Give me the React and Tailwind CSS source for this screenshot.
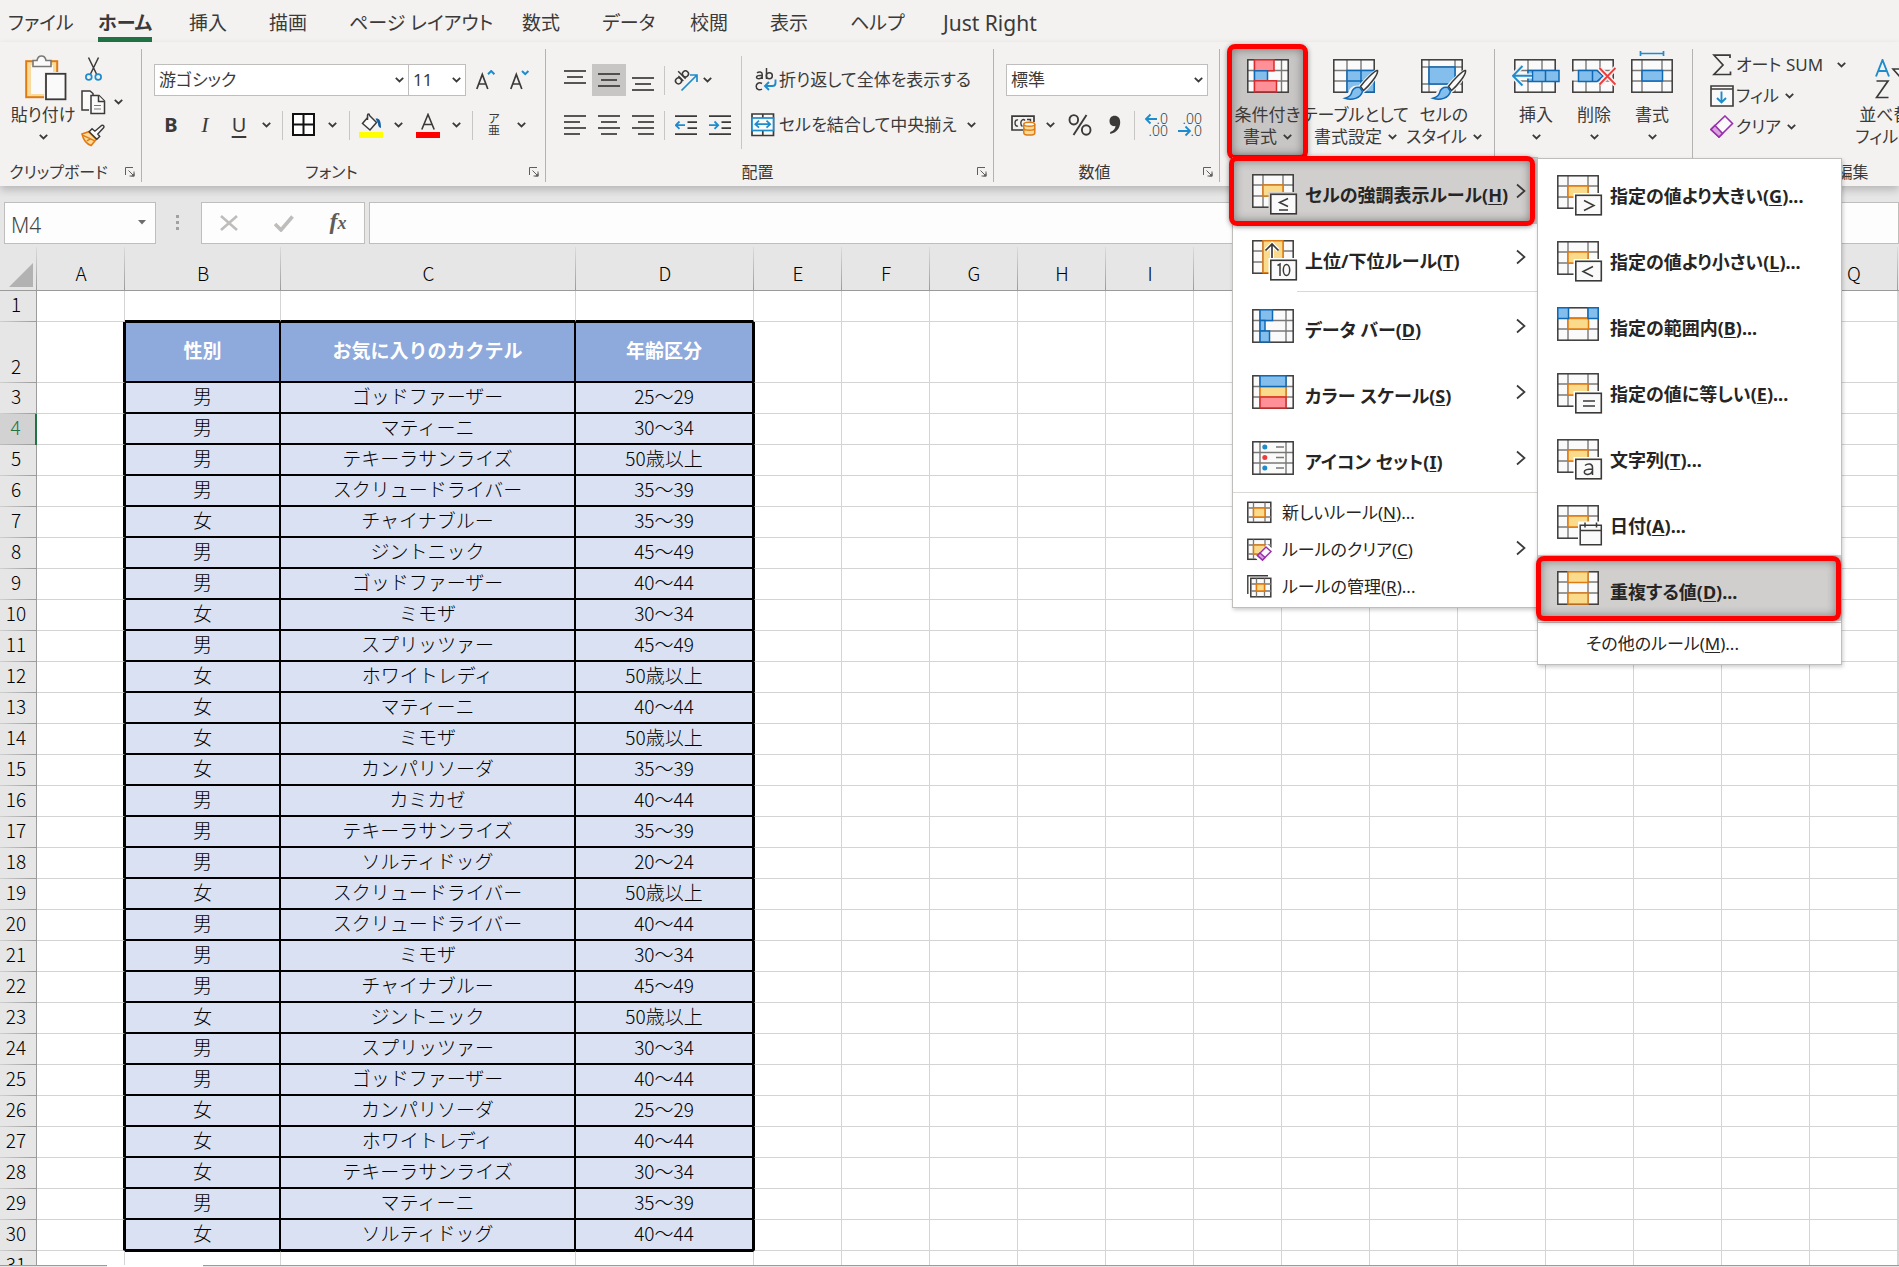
import React from "react";

const DARK = "#3b3a39";
const MID = "#7a7876";
const BLUE = "#1e8bcd";

function Chevron() {
  return (
    <svg width="9" height="6" viewBox="0 0 9 6" fill="none" stroke={DARK} strokeWidth="1.8" aria-hidden="true">
      <path d="M0.8 0.8 4.5 4.4 8.2 0.8" />
    </svg>
  );
}

function ChevButton({ label, className = "w-5" }) {
  return (
    <button aria-label={label} className={"flex h-8 shrink-0 items-center justify-center " + className}>
      <Chevron />
    </button>
  );
}

function Tool({ label, className = "w-[34px]", children }) {
  return (
    <button aria-label={label} className={"flex h-8 shrink-0 items-center justify-center " + className}>
      {children}
    </button>
  );
}

function Sep({ className = "mx-1" }) {
  return <span className={"h-[29px] w-px shrink-0 bg-[#c8c6c4] " + className} />;
}

function Launcher() {
  return (
    <svg width="10" height="10" viewBox="0 0 10 10" fill="none" stroke="#605e5c" strokeWidth="1" aria-hidden="true">
      <path d="M0.5 8V0.5H8M3.5 3.5 8 8M9 4.5V9H4.5" />
      <path d="M9.5 9.5H6L9.5 6Z" fill="#605e5c" stroke="none" />
    </svg>
  );
}

function Group({ label, launcher = true, className, children }) {
  return (
    <section aria-label={label} className={"flex h-[133px] shrink-0 flex-col border-r border-[#b5b3b1] " + className}>
      <div className="flex h-[115px]">{children}</div>
      <div className="flex h-5 items-center">
        <span className="flex-1 text-center text-base leading-5 whitespace-nowrap">{label}</span>
        {launcher && (
          <button aria-label={label + "の設定"} className="flex w-6 items-center justify-start pl-2">
            <Launcher />
          </button>
        )}
      </div>
    </section>
  );
}

/* ---------- ribbon icons ---------- */

function PasteIcon() {
  return (
    <svg width="48" height="46" viewBox="-6 0 48 46" aria-hidden="true">
      <rect x="1.2" y="6.2" width="31" height="36" fill="#fadb9c" stroke="#e07b12" strokeWidth="2" />
      <rect x="6" y="10" width="22" height="29" fill="#fafafa" />
      <path d="M8 11.500V5.500H12C12.500 2.500 14 1 16.500 1C19 1 20.500 2.500 21 5.500H26V11.500Z" fill="#fafafa" stroke={MID} strokeWidth="1.6" />
      <rect x="19" y="17" width="23" height="29" fill="#f3f2f1" />
      <rect x="21" y="18.800" width="19.500" height="25.500" fill="#fafafa" stroke={DARK} strokeWidth="1.8" />
    </svg>
  );
}

function CutIcon() {
  return (
    <svg width="17" height="24" viewBox="0 0 17 24" fill="none" aria-hidden="true">
      <path d="M3.500 0.500 11.500 17M13.500 0.500 5.500 17" stroke={DARK} strokeWidth="1.5" />
      <circle cx="3.800" cy="20" r="2.900" stroke={BLUE} strokeWidth="1.7" />
      <circle cx="13.200" cy="20" r="2.900" stroke={BLUE} strokeWidth="1.7" />
    </svg>
  );
}

function CopyIcon() {
  return (
    <svg width="25" height="25" viewBox="0 0 25 25" fill="#fafafa" stroke={DARK} strokeWidth="1.5" aria-hidden="true">
      <path d="M8 20H1V1H9L12 3.500V5" />
      <path d="M10 5.500H18L23.500 11V23.500H10Z" />
      <path d="M17.500 5.500V11.500H23.500" />
      <path d="M13 15.500H20M13 19H20" stroke={MID} strokeWidth="1.2" />
    </svg>
  );
}

function BrushIcon() {
  return (
    <svg width="25" height="23" viewBox="0 0 25 23" fill="none" aria-hidden="true">
      <path d="M1 10 8 7.500 16 15.500 10.500 22C6 20.500 2.500 16 1 10Z" fill="#fadb9c" stroke="#e07b12" strokeWidth="1.6" />
      <path d="M1.500 11 14.500 17M6 17 10 15" stroke="#e07b12" strokeWidth="1.4" />
      <path d="M8.500 7.500 11.500 4.500 14.500 7 21.500 1C23.500 0.500 24.500 2 23.500 3.500L17.500 10 19.500 12.500 16.500 15.500Z" fill="#fafafa" stroke={DARK} strokeWidth="1.5" />
    </svg>
  );
}

function GrowFont({ down }) {
  return (
    <svg width="20" height="20" viewBox="0 0 20 20" fill="none" aria-hidden="true">
      <path d="M0.800 19 6.300 4.500 11.800 19M2.800 14H9.800" stroke={DARK} strokeWidth="1.700" />
      <path d={down ? "M12 1 15.200 4.200 18.400 1" : "M12 4.200 15.200 1 18.400 4.200"} stroke={BLUE} strokeWidth="2" />
    </svg>
  );
}

function BordersIcon() {
  return (
    <svg width="24" height="24" viewBox="0 0 24 24" fill="#fff" stroke="#111" strokeWidth="2" aria-hidden="true">
      <path d="M1 1H22V22H1ZM11.500 1V22M1 11.500H22" />
    </svg>
  );
}

function FillIcon() {
  return (
    <svg width="24" height="25" viewBox="0 0 24 25" fill="none" aria-hidden="true">
      <path d="M9 4 3.500 10.500 11 17 17.500 9.500 10.500 2.500C10.500 0.500 8.500 0.500 8.500 2.500V7" fill="#fafafa" stroke={DARK} strokeWidth="1.500" />
      <path d="M16.500 5.500C20 5 22 7 22 15C20 14.500 19 13 19 10.500Z" fill="#0f5fa3" />
      <rect x="0" y="19" width="24" height="6" fill="#ffff00" />
    </svg>
  );
}

function FontColorIcon() {
  return (
    <svg width="24" height="25" viewBox="0 0 24 25" fill="none" aria-hidden="true">
      <path d="M5.800 16.500 12 1.500 18.200 16.500M8 11.500H16" stroke={DARK} strokeWidth="1.600" />
      <rect x="0" y="19" width="24" height="6" fill="#ff0000" />
    </svg>
  );
}

function LinesIcon({ lines, h }) {
  return (
    <svg width="22" height={h} viewBox={"0 0 22 " + h} stroke={DARK} strokeWidth="1.700" aria-hidden="true">
      {lines.map(([a, b, y]) => (
        <path key={y} d={"M" + a + " " + y + "H" + b} />
      ))}
    </svg>
  );
}

function OrientationIcon() {
  return (
    <svg width="25" height="24" viewBox="0 0 25 24" fill="none" aria-hidden="true">
      <g transform="rotate(-45 8 9)" stroke={DARK} strokeWidth="1.500">
        <circle cx="3.500" cy="10" r="3" />
        <path d="M6.800 6.500V13.500M10 3V13.500" />
        <circle cx="13.300" cy="10" r="3" />
      </g>
      <path d="M8.500 22.500 23.500 7.500M17 7H24V14" stroke={BLUE} strokeWidth="1.700" />
    </svg>
  );
}

function IndentIcon({ right }) {
  return (
    <svg width="22" height="21" viewBox="0 0 22 21" fill="none" aria-hidden="true">
      <path d="M0 1.200H22M12.500 7.200H22M12.500 13.200H22M0 19.200H22" stroke={DARK} strokeWidth="1.700" />
      <path d={right ? "M0 10.200H9M5.500 6.500 9.200 10.200 5.500 13.900" : "M10 10.200H1M4.500 6.500 0.800 10.200 4.500 13.900"} stroke={BLUE} strokeWidth="1.800" />
    </svg>
  );
}

function WrapIcon() {
  return (
    <svg width="22" height="24" viewBox="0 0 22 24" fill="none" aria-hidden="true">
      <g stroke={DARK} strokeWidth="1.500">
        <path d="M2 4.800C4 3.300 7.200 3.600 7.200 6.200V11M7.200 7.200C4 7.200 1.500 7.600 1.500 9.200C1.500 11.500 6.500 11.300 7.200 8.500" />
        <path d="M11.500 0V11" />
        <circle cx="14.300" cy="7.700" r="3" />
        <path d="M7 15.500C4 13.800 1.200 15.500 1.200 18.300C1.200 21.200 4 22.800 7 21.200" />
      </g>
      <path d="M20.500 11.500V15C20.500 17 19.500 18 17.500 18H10.500M14 14 10 18 14 22" stroke={BLUE} strokeWidth="1.900" />
    </svg>
  );
}

function MergeIcon() {
  return (
    <svg width="24" height="24" viewBox="0 0 24 24" fill="none" aria-hidden="true">
      <path d="M1 1H22.500V22.500H1ZM11.800 1V5M11.800 18V22.500" fill="#fafafa" stroke={DARK} strokeWidth="1.700" />
      <rect x="1" y="5" width="21.500" height="12.500" fill="#fafafa" stroke={BLUE} strokeWidth="1.700" />
      <path d="M4.500 11.200H19M8 7.700 4.300 11.200 8 14.700M15.500 7.700 19.200 11.200 15.500 14.700" stroke={BLUE} strokeWidth="1.700" />
    </svg>
  );
}

function CurrencyIcon() {
  return (
    <svg width="25" height="21" viewBox="0 0 25 21" fill="none" aria-hidden="true">
      <path d="M12 15H1V1.200H23V7" stroke={DARK} strokeWidth="1.700" />
      <path d="M7 5C5.500 4.500 4 5.500 4 8C4 10.500 5.500 11.500 7 11M14 5.500C12.500 3.700 9.800 4.500 9.800 8C9.800 9.500 10.500 11 11.500 11.300M16 4.500H19.500V6.500" stroke={DARK} strokeWidth="1.400" />
      <path d="M12.800 9.500V18C12.800 20.800 23.800 20.800 23.800 18V9.500" fill="#fadb9c" stroke="#e07b12" strokeWidth="1.500" />
      <path d="M12.800 13.500C13.500 15.800 23 15.800 23.800 13.500" stroke="#e07b12" strokeWidth="1.500" />
      <ellipse cx="18.300" cy="9.300" rx="5.500" ry="2" fill="#fafafa" stroke="#e07b12" strokeWidth="1.500" />
    </svg>
  );
}

function PercentIcon() {
  return (
    <svg width="24" height="22" viewBox="0 0 24 22" fill="none" stroke={DARK} strokeWidth="1.900" aria-hidden="true">
      <ellipse cx="5.800" cy="5.800" rx="4.300" ry="4.700" />
      <ellipse cx="18.200" cy="16" rx="4.300" ry="4.700" />
      <path d="M18.500 1 5.500 21" />
    </svg>
  );
}

function CommaIcon() {
  return (
    <svg width="12" height="20" viewBox="0 0 12 20" aria-hidden="true">
      <path d="M5.500 0.800C9 0.800 11.200 3.200 11.200 7.200C11.200 13 7.500 17.500 1.200 19V17C4.500 15.800 6.500 13.500 6.500 11C2.800 11.800 0.500 9.500 0.500 6.200C0.500 3 2.600 0.800 5.500 0.800Z" fill={DARK} />
    </svg>
  );
}

function DecimalIcon({ less }) {
  return (
    <span className="grid h-6 w-6 grid-cols-[10px_14px] grid-rows-2 items-center text-sm leading-3 font-light" aria-hidden="true">
      {less ? (
        <>
          <span className="col-span-2 text-right">.00</span>
          <svg width="14" height="12" viewBox="0 0 14 12" fill="none" stroke={BLUE} strokeWidth="1.800">
            <path d="M0 6H12M7.500 1.500 12 6 7.500 10.500" />
          </svg>
          <span className="text-right">.0</span>
        </>
      ) : (
        <>
          <svg width="14" height="12" viewBox="0 0 14 12" fill="none" stroke={BLUE} strokeWidth="1.800">
            <path d="M13 6H2M6.500 1.500 2 6 6.500 10.500" />
          </svg>
          <span className="text-right">.0</span>
          <span className="col-span-2 text-right">.00</span>
        </>
      )}
    </span>
  );
}

function GridLines({ v = [11, 31], h = [11, 22], frame = DARK }) {
  return (
    <>
      <rect x="0.800" y="0.800" width="40.400" height="32.400" fill="#fafafa" />
      {v.map((x) => (
        <path key={"v" + x} d={"M" + x + " 1V33"} stroke={MID} strokeWidth="1.400" />
      ))}
      {h.map((y) => (
        <path key={"h" + y} d={"M1 " + y + "H41"} stroke={MID} strokeWidth="1.400" />
      ))}
      <rect x="0.800" y="0.800" width="40.400" height="32.400" fill="none" stroke={frame} strokeWidth="1.500" />
    </>
  );
}

const ORANGE = { fill: "#fadb8c", stroke: "#e07b12", strokeWidth: 1.5 };
const SKY = { fill: "#83beec", stroke: "#0f68b4", strokeWidth: 1.5 };
const ROSE = { fill: "#ff9097", stroke: "#d92b2b", strokeWidth: 1.5 };

function Pad({ w = 46, h = 42, children }) {
  return (
    <svg width={w} height={h} viewBox={"0 0 " + w + " " + h} fill="none" className="shrink-0" aria-hidden="true">
      {children}
    </svg>
  );
}

function CondIcon() {
  return (
    <Pad w={42}>
      <GridLines v={[7.5, 34.5]} h={[11.500, 22]} />
      <rect x="7.500" y="0.800" width="19.500" height="11" {...ROSE} />
      <rect x="7.500" y="11.800" width="13" height="10" {...SKY} />
      <rect x="7.500" y="21.800" width="22" height="11" {...ROSE} />
    </Pad>
  );
}

function Brush() {
  return (
    <>
      <path d="M45 11C42 11 31 22 26 28C19 27 17 31 15.500 36C13 38 11 38.500 11 39.500C20 42 27 40 29.500 33.500C35 29 46 16 45 11Z" fill="#f3f2f1" stroke="#f3f2f1" strokeWidth="2.500" />
      <path d="M44.500 11.500C42 11 32 21.500 27.500 27.500L30.500 31.500C36 27 45.500 15.500 44.500 11.500Z" fill="#fafafa" stroke={DARK} strokeWidth="1.500" />
      <path d="M27 28.500C22 27.500 19 30.500 18.500 34C17.500 37 15 38.500 12 39.300C19 41.500 27.500 39.500 29.500 32.500Z" {...SKY} />
    </>
  );
}

function TableStyleIcon() {
  return (
    <Pad>
      <GridLines v={[14, 28]} h={[11.500, 22]} />
      <path d="M14 11.500H41.200V33H14ZM28 11.500V33M14 22H41" {...SKY} />
      <Brush />
    </Pad>
  );
}

function CellStyleIcon() {
  return (
    <Pad>
      <GridLines v={[8, 34]} h={[8, 25]} />
      <rect x="8" y="8" width="26" height="17" {...SKY} />
      <Brush />
    </Pad>
  );
}

function InsertIcon() {
  return (
    <Pad w={48}>
      <g transform="translate(2 0)">
        <GridLines v={[14, 28]} h={[11.500, 22]} />
      </g>
      <path d="M16 11.500H47V22.500H16Z M20.500 11.500V22.500 M33.500 11.500V22.500" {...SKY} />
      <path d="M20 17H1.500M10 7 1 16.800 10 26.500" stroke="#f3f2f1" strokeWidth="5" />
      <path d="M20 16.800H1.500M10.500 7 1 16.800 10.500 26.500" stroke={BLUE} strokeWidth="1.900" />
    </Pad>
  );
}

function DeleteIcon() {
  return (
    <Pad w={44}>
      <GridLines v={[14, 28]} h={[11.500, 22]} />
      <rect x="-1" y="12.500" width="7" height="9" fill="#f3f2f1" />
      <path d="M6.500 11.500H25L31 17 25 22.500H6.500ZM20.500 11.500V22.500" {...SKY} />
      <path d="M27.500 9 43.500 25.500M43.500 9 27.500 25.500" stroke="#f3f2f1" strokeWidth="5" />
      <path d="M27.500 9 43.500 25.500M43.500 9 27.500 25.500" stroke="#ee3c3c" strokeWidth="1.900" />
    </Pad>
  );
}

function FormatIcon() {
  return (
    <svg width="42" height="42" viewBox="0 0 42 42" fill="none" className="shrink-0 overflow-visible" aria-hidden="true">
      <GridLines v={[11, 31]} h={[11.500, 22]} />
      <rect x="11" y="11.500" width="20.500" height="10.500" {...SKY} />
      <path d="M9.500 -5.500H32.500M9.500 -8V-3M32.500 -8V-3" stroke={BLUE} strokeWidth="1.700" />
    </svg>
  );
}

function SigmaIcon() {
  return (
    <svg width="24" height="22" viewBox="0 0 24 22" fill="none" stroke={DARK} strokeWidth="1.700" aria-hidden="true">
      <path d="M20 4V1.200H4L13 11 4 20.500H20.500V17.500" />
    </svg>
  );
}

function FillDownIcon() {
  return (
    <svg width="24" height="22" viewBox="0 0 24 22" fill="#fafafa" stroke={DARK} strokeWidth="1.600" aria-hidden="true">
      <path d="M1 1H23V21H1ZM1 4H23" />
      <path d="M11.500 6.500V17M7 13 11.500 17.500 16 13" stroke={BLUE} strokeWidth="1.900" fill="none" />
    </svg>
  );
}

function EraserIcon() {
  return (
    <svg width="24" height="23" viewBox="0 0 24 23" fill="none" stroke="#9a2fae" strokeWidth="1.600" aria-hidden="true">
      <path d="M15 1 22.500 8.500 9 22 1 14.500Z" fill="#fafafa" />
      <path d="M5 10.500 12.500 18.500 9 22 1 14.500Z" fill="#d9a3dd" />
    </svg>
  );
}

function SortIcon() {
  return (
    <svg width="50" height="42" viewBox="0 0 50 42" fill="none" aria-hidden="true">
      <path d="M1 17.500 7.500 1 14 17.500M3.300 12H11.700" stroke={BLUE} strokeWidth="1.900" />
      <path d="M1.500 22H13L1.500 38.500H13.500" stroke={DARK} strokeWidth="1.700" />
      <path d="M18 10H38L30 19V29L26 26V19Z" fill="#fafafa" stroke={DARK} strokeWidth="1.600" />
    </svg>
  );
}

/* ---------- menu icons ---------- */

function Badge({ bg = "#fff", children }) {
  return (
    <>
      <rect x="16.500" y="18" width="30" height="24" fill={bg} />
      <rect x="18.800" y="20.300" width="25.500" height="19.500" fill="#fafafa" stroke={DARK} strokeWidth="1.600" />
      <g stroke={DARK} strokeWidth="1.500">{children}</g>
    </>
  );
}

function RuleIcon({ bg, children }) {
  return (
    <Pad>
      <GridLines />
      <rect x="11" y="11" width="20" height="11" {...ORANGE} />
      <Badge bg={bg}>{children}</Badge>
    </Pad>
  );
}

const MENU_ICONS = {
  highlight: (
    <RuleIcon bg="#d1cfcd">
      <path d="M36 24.500 27.500 28.500 36 32.500M27 36H36" />
    </RuleIcon>
  ),
  top: (
    <Pad>
      <GridLines />
      <rect x="11" y="0.800" width="20" height="32" {...ORANGE} />
      <path d="M20 20V4M14 10 20 4 26 10" stroke="#fff" strokeWidth="4" />
      <path d="M20 20V4.500M13.500 10.500 20 4 26.500 10.500" stroke={DARK} strokeWidth="1.700" />
      <Badge>
        <path d="M25.500 25.500 28 24V36" />
        <ellipse cx="34.500" cy="30" rx="3.200" ry="5.500" />
      </Badge>
    </Pad>
  ),
  bars: (
    <Pad>
      <GridLines v={[8, 34]} h={[11.500, 22]} />
      <rect x="8" y="0.800" width="12.500" height="10.700" {...SKY} />
      <rect x="8" y="11.500" width="5" height="10.500" {...SKY} />
      <rect x="8" y="22" width="9.500" height="11" {...SKY} />
    </Pad>
  ),
  scale: (
    <Pad>
      <GridLines v={[8, 34]} h={[11.500, 22]} />
      <rect x="8" y="11.500" width="26" height="10.500" {...ORANGE} />
      <rect x="8" y="0.800" width="26" height="10.700" {...SKY} />
      <rect x="8" y="22" width="26" height="11" {...ROSE} />
    </Pad>
  ),
  icons: (
    <Pad>
      <GridLines v={[8, 34]} h={[11.500, 22]} />
      <circle cx="12.800" cy="6" r="2.500" fill={BLUE} />
      <circle cx="12.800" cy="16.500" r="2.500" fill="#ee3c3c" />
      <circle cx="12.800" cy="27" r="2.500" fill={BLUE} />
      <path d="M24 6H32M24 16.500H32M24 27H32" stroke={MID} strokeWidth="1.500" />
    </Pad>
  ),
  gt: (
    <RuleIcon>
      <path d="M27 25.500 37 30.500 27 35.500" />
    </RuleIcon>
  ),
  lt: (
    <RuleIcon>
      <path d="M36 25.500 26 30.500 36 35.500" />
    </RuleIcon>
  ),
  between: (
    <Pad>
      <GridLines />
      <rect x="11" y="11.500" width="20.500" height="10.500" {...ORANGE} />
      <rect x="0.800" y="0.800" width="10.700" height="10.700" {...SKY} />
      <rect x="31" y="0.800" width="10.200" height="10.700" {...SKY} />
    </Pad>
  ),
  eq: (
    <RuleIcon>
      <path d="M26 28H38M26 33H38" />
    </RuleIcon>
  ),
  text: (
    <RuleIcon>
      <path d="M28 26.500C31 24 35.500 24.500 35.500 28.500V36M35.500 30C31 30 27.300 30.200 27.300 33C27.300 36.500 34 36.300 35.500 32" />
    </RuleIcon>
  ),
  date: (
    <Pad>
      <GridLines />
      <rect x="11" y="11" width="20" height="11" {...ORANGE} />
      <rect x="21" y="16.500" width="26" height="26" fill="#fff" />
      <path d="M23.200 20.300H44.300V39.800H23.200ZM23.200 25.500H44.300M28 17.500V22.500M39.500 17.500V22.500" fill="#fafafa" stroke={DARK} strokeWidth="1.500" />
    </Pad>
  ),
  dup: (
    <Pad>
      <GridLines />
      <rect x="11" y="0.800" width="20" height="10.700" {...ORANGE} />
      <rect x="11" y="22" width="20" height="11" {...ORANGE} />
    </Pad>
  ),
};

function SmallGrid({ children }) {
  return (
    <svg width="25" height="23" viewBox="0 0 25 23" fill="none" className="shrink-0" aria-hidden="true">
      {children}
    </svg>
  );
}

const SMALL_ICONS = {
  fresh: (
    <SmallGrid>
      <rect x="0.800" y="1.300" width="23" height="20" fill="#fafafa" stroke={DARK} strokeWidth="1.500" />
      <path d="M6.500 1.500V21M18 1.500V21M1 7H24M1 16H24" stroke={MID} strokeWidth="1.300" />
      <rect x="6.500" y="7" width="11.500" height="9" {...ORANGE} />
    </SmallGrid>
  ),
  clear: (
    <SmallGrid>
      <rect x="0.800" y="1.300" width="23" height="20" fill="#fafafa" stroke={DARK} strokeWidth="1.500" />
      <path d="M6.500 1.500V21M18 1.500V21M1 7H24M1 16H24" stroke={MID} strokeWidth="1.300" />
      <rect x="6.500" y="7" width="11.500" height="9" {...ORANGE} />
      <path d="M20 6 26 11V24H12L8 19Z" fill="#fff" />
      <path d="M19 9 24 13.500 15.500 22 10.500 17.500Z" fill="#fafafa" stroke="#9a2fae" strokeWidth="1.500" />
      <path d="M13 15 18 19.500 15.500 22 10.500 17.500Z" fill="#d9a3dd" stroke="#9a2fae" strokeWidth="1.500" />
    </SmallGrid>
  ),
  manage: (
    <SmallGrid>
      <path d="M0.800 19V0.800H21" stroke={DARK} strokeWidth="1.400" />
      <rect x="3.800" y="3.300" width="20" height="18.500" fill="#fafafa" stroke={DARK} strokeWidth="1.500" />
      <path d="M9.500 3.500V21.500M17.500 3.500V21.500M4 9H24M4 16H24" stroke={MID} strokeWidth="1.300" />
      <rect x="9.500" y="9" width="8" height="7" {...ORANGE} />
    </SmallGrid>
  ),
};

function RedFrame({ className }) {
  return (
    <span
      aria-hidden="true"
      className={"pointer-events-none absolute z-10 rounded-lg border-5 border-[#ff0000] shadow-[inset_0_0_10px_rgba(0,0,0,0.4),0_1px_5px_rgba(0,0,0,0.4)] " + className}
    />
  );
}

function Arrow({ className }) {
  return (
    <svg width="10" height="16" viewBox="0 0 10 16" fill="none" stroke={DARK} strokeWidth="1.700" className={"shrink-0 " + className} aria-hidden="true">
      <path d="M1 1.500 8.500 8 1 14.500" />
    </svg>
  );
}

function BigItem({ icon, text, k, tail = "", arrow, active, children }) {
  return (
    <li role="none" className="relative">
      <button role="menuitem" className={"flex h-[66px] w-full items-center pt-2 pr-[11px] pl-[19px] text-left " + (active ? "bg-[#d1cfcd]" : "")}>
        {icon}
        <span className="ml-[7px] flex-1 text-lg leading-6 font-bold whitespace-nowrap">
          {text}(<u className="underline-offset-2">{k}</u>){tail}
        </span>
        {arrow && <Arrow className="mb-2" />}
      </button>
      {children}
    </li>
  );
}

function SmallItem({ icon, text, k, tail = "", arrow }) {
  return (
    <li role="none">
      <button role="menuitem" className="flex h-[37px] w-full items-center pr-[11px] pl-3.5 text-left">
        {icon}
        <span className="ml-2.5 flex-1 text-[17px] leading-6 whitespace-nowrap">
          {text}(<u className="underline-offset-2">{k}</u>){tail}
        </span>
        {arrow && <Arrow className="mb-1" />}
      </button>
    </li>
  );
}

function SubMenu() {
  return (
    <ul role="menu" className="absolute top-0 left-[304px] z-20 w-[305px] border border-[#c0bebc] bg-white shadow-[1px_2px_4px_rgba(0,0,0,0.2)]">
      <BigItem icon={MENU_ICONS.gt} text="指定の値より大きい" k="G" tail="..." />
      <BigItem icon={MENU_ICONS.lt} text="指定の値より小さい" k="L" tail="..." />
      <BigItem icon={MENU_ICONS.between} text="指定の範囲内" k="B" tail="..." />
      <BigItem icon={MENU_ICONS.eq} text="指定の値に等しい" k="E" tail="..." />
      <BigItem icon={MENU_ICONS.text} text="文字列" k="T" tail="..." />
      <BigItem icon={MENU_ICONS.date} text="日付" k="A" tail="..." />
      <BigItem icon={MENU_ICONS.dup} text="重複する値" k="D" tail="..." active>
        <RedFrame className="top-px right-0 bottom-0 -left-0.5" />
      </BigItem>
      <li role="separator" className="my-px h-px bg-[#c8c6c4]" />
      <li role="none">
        <button role="menuitem" className="flex h-10 w-full items-center pl-12 text-[17px] leading-6">
          その他のルール(<u className="underline-offset-2">M</u>)...
        </button>
      </li>
    </ul>
  );
}

function RuleMenu() {
  return (
    <ul role="menu" className="absolute top-[108px] left-0 z-20 w-[306px] border border-[#c0bebc] bg-white pb-0.5 text-[#262524] shadow-[1px_2px_4px_rgba(0,0,0,0.2)]">
      <BigItem icon={MENU_ICONS.highlight} text="セルの強調表示ルール" k="H" arrow active>
        <RedFrame className="-top-0.5 right-0.5 -bottom-0.5 -left-1" />
        <SubMenu />
      </BigItem>
      <BigItem icon={MENU_ICONS.top} text="上位/下位ルール" k="T" arrow />
      <li role="separator" className="my-px ml-16 h-px bg-[#dad8d6]" />
      <BigItem icon={MENU_ICONS.bars} text="データ バー" k="D" arrow />
      <BigItem icon={MENU_ICONS.scale} text="カラー スケール" k="S" arrow />
      <BigItem icon={MENU_ICONS.icons} text="アイコン セット" k="I" arrow />
      <li role="separator" className="my-px h-px bg-[#dad8d6]" />
      <SmallItem icon={SMALL_ICONS.fresh} text="新しいルール" k="N" tail="..." />
      <SmallItem icon={SMALL_ICONS.clear} text="ルールのクリア" k="C" arrow />
      <SmallItem icon={SMALL_ICONS.manage} text="ルールの管理" k="R" tail="..." />
    </ul>
  );
}

/* ---------- ribbon ---------- */

const TABS = ["ファイル", "ホーム", "挿入", "描画", "ページ レイアウト", "数式", "データ", "校閲", "表示", "ヘルプ", "Just Right"];

function Tabs() {
  return (
    <nav className="grid h-[42px] shrink-0 grid-cols-[90px_91px_80px_80px_173px_80px_88px_80px_80px_93px_auto] justify-items-start pt-2 pl-2 text-[19px] leading-7">
      {TABS.map((t) => (
        <button
          key={t}
          className={
            "h-[34px] border-b-5 whitespace-nowrap " +
            (t === "ホーム" ? "border-[#217346] font-bold" : "border-transparent") +
            (t === "Just Right" ? " text-[21px]" : "")
          }
        >
          {t}
        </button>
      ))}
    </nav>
  );
}

function BigButton({ icon, lines, className, iconClass = "h-[45px]" }) {
  return (
    <button className={"flex h-[106px] shrink-0 flex-col items-center text-[17px] leading-[22px] whitespace-nowrap " + className}>
      <span className={"flex shrink-0 " + iconClass}>{icon}</span>
      {lines.map((l, i) => (
        <span key={i} className="flex h-[22px] items-center gap-1.5">
          {l}
          {i === lines.length - 1 && <Chevron />}
        </span>
      ))}
    </button>
  );
}

function SelectBox({ label, value, className }) {
  return (
    <span className={"relative flex h-8 shrink-0 border border-[#c0bebc] bg-white " + className}>
      <select aria-label={label} defaultValue={value} className="w-full appearance-none bg-transparent px-1 text-[17px] leading-6 outline-none">
        <option>{value}</option>
      </select>
      <span className="pointer-events-none absolute top-3 right-1">
        <Chevron />
      </span>
    </span>
  );
}

function EditRow({ icon, text, gap = "gap-1.5" }) {
  return (
    <button className={"flex h-[31px] items-center text-[17px] leading-6 whitespace-nowrap " + gap}>
      <span className="flex items-center gap-0.5">
        {icon}
        {text}
      </span>
      <Chevron />
    </button>
  );
}

function Ribbon() {
  return (
    <div className="relative z-10 flex h-36 shrink-0 bg-[#f3f2f1] pt-[7px] shadow-[0_4px_8px_rgba(0,0,0,0.2)]">
      <Group label="クリップボード" className="w-[142px]">
        <BigButton className="ml-2 w-[70px] pt-1.5" iconClass="h-[49px]" icon={<PasteIcon />} lines={["貼り付け", ""]} />
        <div className="flex flex-col pt-1.5 pl-[3px]">
          <button aria-label="切り取り" className="flex h-7 w-6 items-center justify-center"><CutIcon /></button>
          <div className="flex h-[38px] items-center gap-2">
            <button aria-label="コピー"><CopyIcon /></button>
            <button aria-label="コピーのオプション"><Chevron /></button>
          </div>
          <button aria-label="書式のコピー" className="flex h-7 w-6 items-center"><BrushIcon /></button>
        </div>
      </Group>

      <Group label="フォント" className="w-[404px]">
        <div className="flex flex-col gap-[13px] pt-[15px] pl-3">
          <div className="flex items-center">
            <SelectBox label="フォント名" value="游ゴシック" className="w-[255px]" />
            <SelectBox label="フォント サイズ" value="11" className="-ml-px w-[58px]" />
            <Tool label="フォント サイズの拡大" className="w-10"><GrowFont /></Tool>
            <Tool label="フォント サイズの縮小" className="w-7"><GrowFont down /></Tool>
          </div>
          <div className="flex items-center text-xl">
            <Tool label="太字"><span className="font-bold">B</span></Tool>
            <Tool label="斜体"><span className="font-['Liberation_Serif',serif] text-[22px] italic">I</span></Tool>
            <Tool label="下線"><span className="underline underline-offset-4">U</span></Tool>
            <ChevButton label="下線のオプション" />
            <Sep className="mx-1.5" />
            <Tool label="罫線" className="w-[30px]"><BordersIcon /></Tool>
            <ChevButton label="罫線のオプション" className="w-[26px]" />
            <Sep />
            <Tool label="塗りつぶしの色"><FillIcon /></Tool>
            <ChevButton label="塗りつぶしのオプション" />
            <Tool label="フォントの色" className="w-10"><FontColorIcon /></Tool>
            <ChevButton label="フォントの色のオプション" className="w-4" />
            <Sep className="mx-2" />
            <Tool label="ふりがな" className="w-[26px]">
              <span className="flex flex-col text-xs leading-3"><span>ア</span><span>亜</span></span>
            </Tool>
            <ChevButton label="ふりがなのオプション" className="w-7" />
          </div>
        </div>
      </Group>

      <Group label="配置" className="w-[448px]">
        <div className="flex w-[195px] flex-col gap-[13px] pt-[15px] pl-3">
          <div className="flex items-center">
            <Tool label="上揃え"><LinesIcon h={26} lines={[[0, 22, 4], [3, 19, 10], [0, 22, 16]]} /></Tool>
            <Tool label="上下中央揃え" className="w-[34px] bg-[#c8c6c4]"><LinesIcon h={16} lines={[[0, 22, 2], [3, 19, 8], [0, 22, 14]]} /></Tool>
            <Tool label="下揃え"><LinesIcon h={26} lines={[[0, 22, 11], [3, 19, 17], [0, 22, 23]]} /></Tool>
            <Sep />
            <Tool label="方向" className="w-8"><OrientationIcon /></Tool>
            <ChevButton label="方向のオプション" className="w-3" />
          </div>
          <div className="flex items-center">
            <Tool label="左揃え"><LinesIcon h={21} lines={[[0, 22, 1], [0, 16, 7], [0, 22, 13], [0, 16, 19]]} /></Tool>
            <Tool label="中央揃え"><LinesIcon h={21} lines={[[0, 22, 1], [3, 19, 7], [0, 22, 13], [3, 19, 19]]} /></Tool>
            <Tool label="右揃え"><LinesIcon h={21} lines={[[0, 22, 1], [6, 22, 7], [0, 22, 13], [6, 22, 19]]} /></Tool>
            <Sep />
            <Tool label="インデントを減らす"><IndentIcon /></Tool>
            <Tool label="インデントを増やす"><IndentIcon right /></Tool>
          </div>
        </div>
        <span className="mt-[7px] h-[93px] w-px bg-[#c8c6c4]" />
        <div className="flex flex-col gap-[13px] pt-[15px] pl-[9px] text-[17px] leading-6 whitespace-nowrap">
          <button className="flex h-8 items-center gap-0.5 pl-1"><WrapIcon />折り返して全体を表示する</button>
          <div className="flex h-8 items-center gap-2.5">
            <button className="flex items-center gap-1"><MergeIcon />セルを結合して中央揃え</button>
            <button aria-label="結合のオプション"><Chevron /></button>
          </div>
        </div>
      </Group>

      <Group label="数値" className="w-[226px]">
        <div className="flex flex-col gap-[13px] pt-[15px] pl-3">
          <SelectBox label="表示形式" value="標準" className="w-[202px]" />
          <div className="flex items-center">
            <Tool label="通貨表示形式"><CurrencyIcon /></Tool>
            <ChevButton label="通貨のオプション" />
            <Tool label="パーセント スタイル" className="w-10"><PercentIcon /></Tool>
            <Tool label="桁区切りスタイル" className="w-[30px]"><CommaIcon /></Tool>
            <Sep />
            <Tool label="小数点以下の表示桁数を増やす"><DecimalIcon /></Tool>
            <Tool label="小数点以下の表示桁数を減らす"><DecimalIcon less /></Tool>
          </div>
        </div>
      </Group>

      <Group label="スタイル" launcher={false} className="w-[275px]">
        <div className="relative ml-3 h-[106px] shrink-0">
          <BigButton className="w-[71px] bg-[#c8c6c4] pt-2.5" icon={<CondIcon />} lines={["条件付き", "書式"]} />
          <RedFrame className="-top-[5px] -right-[5px] -bottom-[5px] -left-[5px]" />
          <RuleMenu />
        </div>
        <BigButton className="w-[105px] pt-2.5" icon={<TableStyleIcon />} lines={["テーブルとして", "書式設定"]} />
        <BigButton className="w-[72px] pt-2.5" icon={<CellStyleIcon />} lines={["セルの", "スタイル"]} />
      </Group>

      <Group label="セル" launcher={false} className="w-[198px]">
        <BigButton className="ml-3 w-[58px] pt-2.5" icon={<InsertIcon />} lines={["挿入", ""]} />
        <BigButton className="w-[58px] pt-2.5" icon={<DeleteIcon />} lines={["削除", ""]} />
        <BigButton className="w-[58px] pt-2.5" icon={<FormatIcon />} lines={["書式", ""]} />
      </Group>

      <Group label="編集" launcher={false} className="w-[320px]">
        <div className="w-[145px] shrink-0 pl-[17px]">
          <EditRow icon={<SigmaIcon />} text="オート SUM" gap="gap-3.5" />
          <EditRow icon={<FillDownIcon />} text="フィル" />
          <EditRow icon={<EraserIcon />} text="クリア" />
        </div>
        <BigButton className="ml-3 w-[100px] pt-2.5" icon={<SortIcon />} lines={["並べ替えと", "フィルター"]} />
      </Group>
    </div>
  );
}

/* ---------- formula bar ---------- */

function FormulaBar() {
  return (
    <div className="flex h-[61px] shrink-0 items-start bg-[#e6e6e6] pt-4 pl-1">
      <div className="relative h-[42px] w-[152px] shrink-0">
        <input aria-label="名前ボックス" defaultValue="M4" className="h-full w-full border border-[#c0bebc] bg-[#fdfdfd] pt-1 pl-1.5 text-[21px] font-light text-[#444] outline-none" />
        <svg width="8" height="5" viewBox="0 0 8 5" className="pointer-events-none absolute top-[18px] right-2.5" aria-hidden="true">
          <path d="M0 0H8L4 4.500Z" fill="#6e6c6a" />
        </svg>
      </div>
      <span className="mt-[13px] ml-5 flex flex-col gap-[3px]" aria-hidden="true">
        <span className="size-[3px] bg-[#a3a19f]" />
        <span className="size-[3px] bg-[#a3a19f]" />
        <span className="size-[3px] bg-[#a3a19f]" />
      </span>
      <div className="ml-[22px] flex h-[42px] w-[164px] shrink-0 items-center border border-[#c0bebc] bg-[#fdfdfd]">
        <button aria-label="キャンセル" className="flex w-[54px] justify-center">
          <svg width="18" height="16" viewBox="0 0 18 16" stroke="#bebdbc" strokeWidth="2.600" aria-hidden="true"><path d="M1 1 17 15M17 1 1 15" /></svg>
        </button>
        <button aria-label="入力" className="flex w-[56px] justify-center">
          <svg width="20" height="17" viewBox="0 0 20 17" fill="none" stroke="#bebdbc" strokeWidth="3.600" aria-hidden="true"><path d="M1 9 7 15 18.500 1.500" /></svg>
        </button>
        <button aria-label="関数の挿入" className="flex w-[52px] items-baseline justify-center font-['Liberation_Serif',serif] text-2xl leading-6 font-bold text-[#5f5d5b] italic">
          f<span className="text-lg">x</span>
        </button>
      </div>
      <input aria-label="数式バー" className="ml-1 h-[42px] min-w-0 flex-1 border border-[#c0bebc] bg-[#fdfdfd] px-2 outline-none" />
    </div>
  );
}

/* ---------- sheet ---------- */

const DATA = [
  ["男", "ゴッドファーザー", "25～29"],
  ["男", "マティーニ", "30～34"],
  ["男", "テキーラサンライズ", "50歳以上"],
  ["男", "スクリュードライバー", "35～39"],
  ["女", "チャイナブルー", "35～39"],
  ["男", "ジントニック", "45～49"],
  ["男", "ゴッドファーザー", "40～44"],
  ["女", "ミモザ", "30～34"],
  ["男", "スプリッツァー", "45～49"],
  ["女", "ホワイトレディ", "50歳以上"],
  ["女", "マティーニ", "40～44"],
  ["女", "ミモザ", "50歳以上"],
  ["女", "カンパリソーダ", "35～39"],
  ["男", "カミカゼ", "40～44"],
  ["男", "テキーラサンライズ", "35～39"],
  ["男", "ソルティドッグ", "20～24"],
  ["女", "スクリュードライバー", "50歳以上"],
  ["男", "スクリュードライバー", "40～44"],
  ["男", "ミモザ", "30～34"],
  ["男", "チャイナブルー", "45～49"],
  ["女", "ジントニック", "50歳以上"],
  ["男", "スプリッツァー", "30～34"],
  ["男", "ゴッドファーザー", "40～44"],
  ["女", "カンパリソーダ", "25～29"],
  ["女", "ホワイトレディ", "40～44"],
  ["女", "テキーラサンライズ", "30～34"],
  ["男", "マティーニ", "35～39"],
  ["女", "ソルティドッグ", "40～44"],
];

const LETTERS = "ABCDEFGHIJKLMNOPQ".split("");
const REST = LETTERS.slice(4).concat("R");
const GRID = "border-r border-b border-[#d4d4d4]";

function RowHead({ n }) {
  const active = n === 4;
  return (
    <th
      scope="row"
      className={
        "bg-[length:100%_1px] bg-bottom bg-no-repeat px-0 pt-0 pb-[5px] text-center font-light " +
        (n === 2 ? "align-bottom " : "") +
        (active
          ? "border-r-2 border-[#217346] bg-[#d2d2d2] bg-[linear-gradient(to_right,#bdbdbd,#9b9b9b)] text-[#217346]"
          : "border-r border-[#9b9b9b] bg-[#e6e6e6] bg-[linear-gradient(to_right,#d0d0d0,#9b9b9b)]")
      }
    >
      <span className="pr-1">{n}</span>
    </th>
  );
}

function Sheet() {
  return (
    <main className="min-h-0 flex-1 overflow-hidden bg-white">
      <table className="w-full table-fixed border-separate border-spacing-0 font-['Noto_Sans_CJK_JP',sans-serif] text-[19px] leading-6 font-light text-black [font-feature-settings:normal]">
        <colgroup>
          <col className="w-[37px]" />
          <col className="w-[88px]" />
          <col className="w-[156px]" />
          <col className="w-[295px]" />
          <col className="w-[178px]" />
          {LETTERS.slice(4).map((l) => (
            <col key={l} className="w-[88px]" />
          ))}
          <col />
        </colgroup>
        <thead>
          <tr className="h-11 bg-[#e6e6e6]">
            <th className="border-b border-[#9b9b9b] bg-[linear-gradient(to_bottom,#dcdcdc,#9b9b9b)] bg-[length:1px_100%] bg-right bg-no-repeat p-0">
              <svg width="24" height="24" viewBox="0 0 24 24" className="mt-3 ml-[9px]" aria-hidden="true">
                <path d="M24 0V24H0Z" fill="#b2b2b2" />
              </svg>
            </th>
            {LETTERS.map((l) => (
              <th key={l} scope="col" className="border-b border-[#9b9b9b] bg-[linear-gradient(to_bottom,#dcdcdc,#9b9b9b)] bg-[length:1px_100%] bg-right bg-no-repeat p-0 pt-2 text-center font-light">
                {l}
              </th>
            ))}
            <th className="border-b border-[#9b9b9b]" />
          </tr>
        </thead>
        <tbody>
          <tr className="h-[31px]">
            <RowHead n={1} />
            <td className={GRID} />
            <td className="border-r border-b-2 border-r-[#d4d4d4] border-b-black" />
            <td className="border-r border-b-2 border-r-[#d4d4d4] border-b-black" />
            <td className="border-r border-b-2 border-r-[#d4d4d4] border-b-black" />
            {REST.map((l) => (
              <td key={l} className={GRID} />
            ))}
          </tr>
          <tr className="h-[61px]">
            <RowHead n={2} />
            <td className="border-r-2 border-b border-r-black border-b-[#d4d4d4]" />
            {["性別", "お気に入りのカクテル", "年齢区分"].map((t, i) => (
              <td key={t} className={"border-t border-r-2 border-b-2 border-black bg-[#8ea9db] p-0 pb-1 text-center font-bold text-white " + (i === 0 ? "border-l" : "")}>
                {t}
              </td>
            ))}
            {REST.map((l, i) => (
              <td key={l} className={GRID + (i === 0 ? " border-l border-l-black" : "")} />
            ))}
          </tr>
          {DATA.map((row, r) => (
            <tr key={r} className="h-[31px]">
              <RowHead n={r + 3} />
              <td className="border-r-2 border-b border-r-black border-b-[#d4d4d4]" />
              {row.map((t, i) => (
                <td key={i} className={"border-r-2 border-b-2 border-black bg-[#d9e1f2] p-0 pb-1 text-center " + (i === 0 ? "border-l" : "")}>
                  {t}
                </td>
              ))}
              {REST.map((l, i) => (
                <td key={l} className={GRID + (i === 0 ? " border-l border-l-black" : "")} />
              ))}
            </tr>
          ))}
          <tr className="h-[31px]">
            <RowHead n={31} />
            <td className={GRID} />
            <td className="border-t border-r border-b border-t-black border-r-[#d4d4d4] border-b-[#d4d4d4]" />
            <td className="border-t border-r border-b border-t-black border-r-[#d4d4d4] border-b-[#d4d4d4]" />
            <td className="border-t border-r border-b border-t-black border-r-[#d4d4d4] border-b-[#d4d4d4]" />
            {REST.map((l) => (
              <td key={l} className={GRID} />
            ))}
          </tr>
        </tbody>
      </table>
    </main>
  );
}

export default function App() {
  return (
    <div className="flex h-screen flex-col overflow-hidden bg-[#f3f2f1] font-['Noto_Sans','Noto_Sans_CJK_JP',sans-serif] text-[#3b3a39] [font-feature-settings:'palt']">
      <Tabs />
      <Ribbon />
      <FormulaBar />
      <Sheet />
      <footer className="flex h-0.5 shrink-0 bg-white">
        <span className="w-[107px] border-t border-[#9b9b9b] bg-[#e6e6e6]" />
        <span className="ml-24 flex-1 border-t border-[#9b9b9b] bg-[#e6e6e6]" />
      </footer>
    </div>
  );
}
